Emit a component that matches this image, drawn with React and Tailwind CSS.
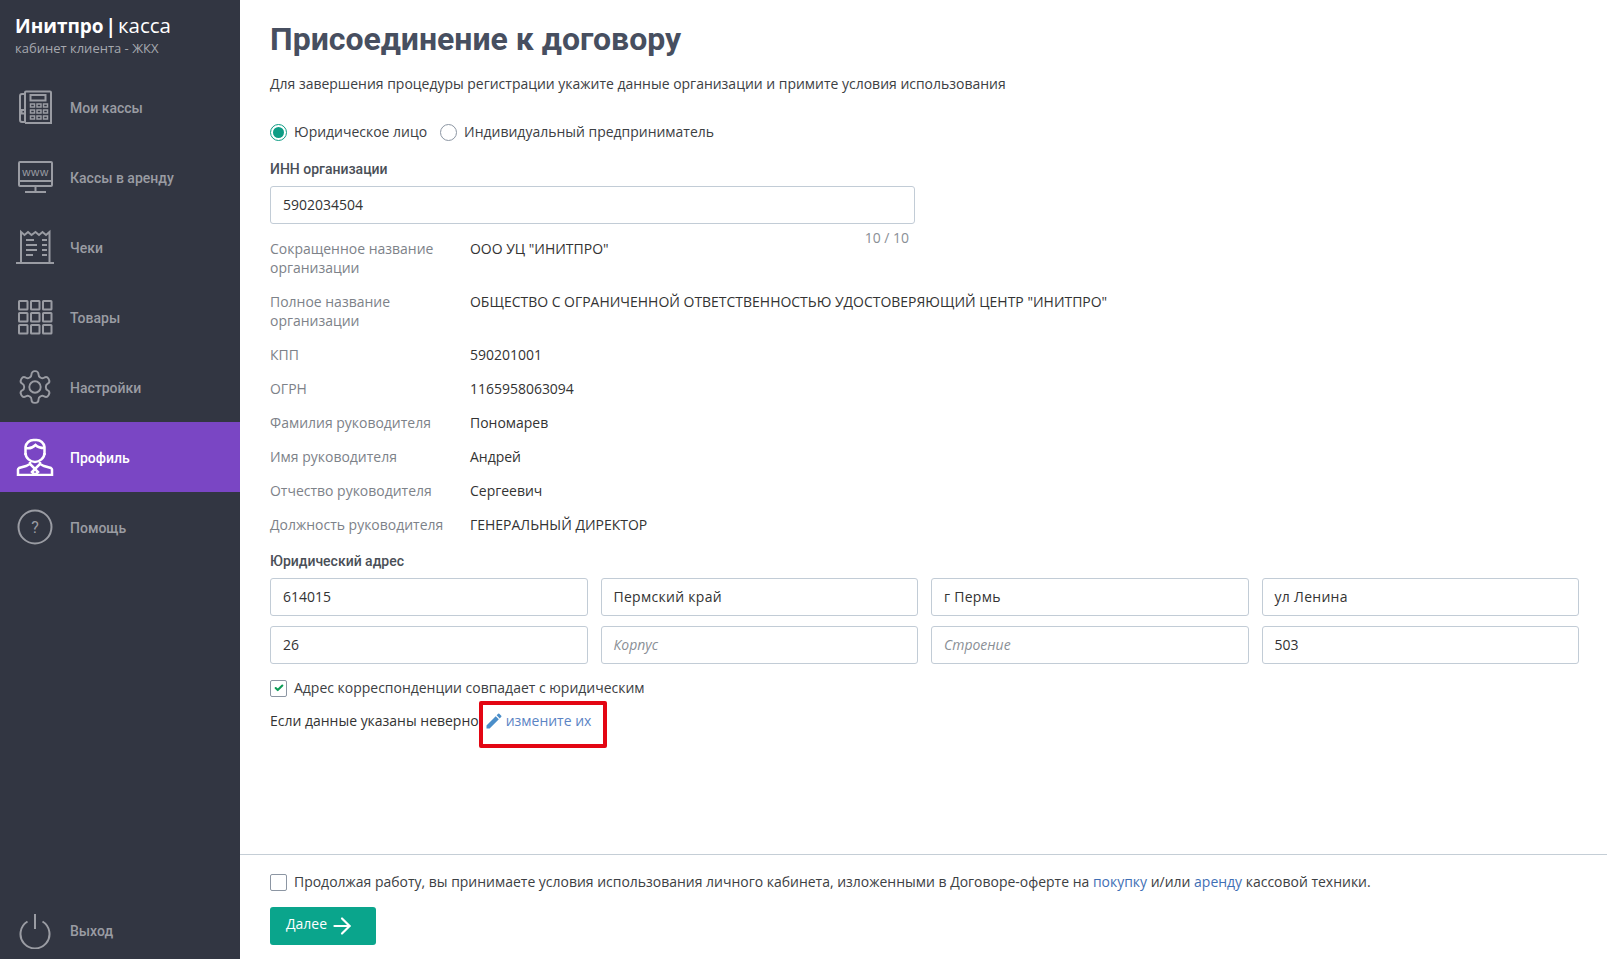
import { ArrowRight, Check } from "lucide-react";

const ic = { fill: "none", stroke: "currentColor", strokeWidth: 2 };

function IconKassa() {
  return (
    <svg viewBox="0 0 36 36" className="w-9 h-9" {...ic}>
      <path d="M5 5h3v28H5a2 2 0 0 1-2-2V7a2 2 0 0 1 2-2z" />
      <path d="M8 6V3.500a1 1 0 0 1 1-1h24a1 1 0 0 1 1 1V34H8" />
      <rect x="13.500" y="6" width="15" height="5.500" />
      <rect x="4.500" y="21" width="3.500" height="3.500" />
      {[14, 20.500, 27].map((x) =>
        [15, 21, 27].map((y) => <rect key={`${x}-${y}`} x={x - 0.500} y={y} width="4" height="3" strokeWidth="1.500" />)
      )}
    </svg>
  );
}

function IconWww() {
  return (
    <svg viewBox="0 0 36 36" className="w-9 h-9" {...ic}>
      <rect x="2" y="3" width="33" height="24" rx="1" />
      <path d="M2 22h33M18.500 27v6M8 33h21" />
      <text x="18.500" y="17" textAnchor="middle" fontSize="11.500" fill="currentColor" stroke="none" fontFamily="'Liberation Sans', sans-serif" letterSpacing="0.600">
        www
      </text>
    </svg>
  );
}

function IconReceipt() {
  return (
    <svg viewBox="0 0 38 36" className="w-[38px] h-9 -ml-[1px]" {...ic}>
      <path d="M0 34h38M5 33V3l3.500 3 3.500-3 3.500 3 4-3 3.500 3 3.500-3 3.500 3 3.500-3v30" />
      <path d="M10 11h8M10 16h11M10 21h11M10 26h7M26 11h5M26 16h5M26 21h5M26 26h5" />
    </svg>
  );
}

function IconGrid() {
  const pos = [2, 14, 26];
  return (
    <svg viewBox="0 0 36 36" className="w-9 h-9" {...ic}>
      {pos.map((x) =>
        pos.map((y) => <rect key={`${x}-${y}`} x={x} y={y} width="8.500" height="8.500" rx="0.500" />)
      )}
    </svg>
  );
}

function IconGear() {
  return (
    <svg viewBox="0 0 24 24" className="w-[38px] h-[38px] -ml-[1px]" fill="none" stroke="currentColor" strokeWidth="1.200">
      <path d="M12.220 2h-.440a2 2 0 0 0-2 2v.180a2 2 0 0 1-1 1.730l-.430.250a2 2 0 0 1-2 0l-.150-.080a2 2 0 0 0-2.730.730l-.220.380a2 2 0 0 0 .730 2.730l.150.100a2 2 0 0 1 1 1.720v.510a2 2 0 0 1-1 1.740l-.150.090a2 2 0 0 0-.730 2.730l.220.380a2 2 0 0 0 2.730.730l.150-.080a2 2 0 0 1 2 0l.430.250a2 2 0 0 1 1 1.730V20a2 2 0 0 0 2 2h.440a2 2 0 0 0 2-2v-.180a2 2 0 0 1 1-1.730l.430-.250a2 2 0 0 1 2 0l.150.080a2 2 0 0 0 2.730-.730l.220-.390a2 2 0 0 0-.730-2.730l-.150-.080a2 2 0 0 1-1-1.740v-.500a2 2 0 0 1 1-1.740l.150-.090a2 2 0 0 0 .730-2.730l-.220-.380a2 2 0 0 0-2.730-.730l-.150.080a2 2 0 0 1-2 0l-.430-.250a2 2 0 0 1-1-1.730V4a2 2 0 0 0-2-2z" />
      <circle cx="12" cy="12" r="3.600" />
    </svg>
  );
}

function IconProfile() {
  return (
    <svg viewBox="0 0 38 38" className="w-[38px] h-[38px] -ml-[1px]" fill="none" stroke="currentColor" strokeWidth="2.500">
      <path d="M9.500 17V9a8 8 0 0 1 8-7h3a8 8 0 0 1 8 7v8" />
      <path d="M9.500 10c4 1 8-1 10-3 2 2 6 3 9 3" />
      <path d="M9.500 15c0 5 5 9 9.500 9s9.500-4 9.500-9" />
      <path d="M14 24v2l5 5 5-5v-2M14 26l-4 2-7 2a2 2 0 0 0-1 2v5h34v-5a2 2 0 0 0-1-2l-7-2-4-2" />
      <path d="M19 31l-3 3 3 3 3-3z" />
    </svg>
  );
}

function IconHelp() {
  return (
    <svg viewBox="0 0 36 36" className="w-9 h-9" fill="none" stroke="currentColor" strokeWidth="2">
      <circle cx="18" cy="18" r="16.500" />
      <text x="18" y="24" textAnchor="middle" fontSize="16" fill="currentColor" stroke="none" fontFamily="Roboto, sans-serif">
        ?
      </text>
    </svg>
  );
}

function IconPower() {
  return (
    <svg viewBox="0 0 34 36" className="w-[34px] h-9" fill="none" stroke="currentColor" strokeWidth="2">
      <path d="M17 1v15" />
      <path d="M9.500 8.500a14.500 14.500 0 1 0 15 0" />
    </svg>
  );
}

const menu = [
  { label: "Мои кассы", icon: <IconKassa /> },
  { label: "Кассы в аренду", icon: <IconWww /> },
  { label: "Чеки", icon: <IconReceipt /> },
  { label: "Товары", icon: <IconGrid /> },
  { label: "Настройки", icon: <IconGear /> },
  { label: "Профиль", icon: <IconProfile />, active: true },
  { label: "Помощь", icon: <IconHelp /> },
];

const details = [
  ["Сокращенное название организации", 'ООО УЦ "ИНИТПРО"'],
  ["Полное название организации", 'ОБЩЕСТВО С ОГРАНИЧЕННОЙ ОТВЕТСТВЕННОСТЬЮ УДОСТОВЕРЯЮЩИЙ ЦЕНТР "ИНИТПРО"'],
  ["КПП", "590201001"],
  ["ОГРН", "1165958063094"],
  ["Фамилия руководителя", "Пономарев"],
  ["Имя руководителя", "Андрей"],
  ["Отчество руководителя", "Сергеевич"],
  ["Должность руководителя", "ГЕНЕРАЛЬНЫЙ ДИРЕКТОР"],
];

const address = [
  { value: "614015" },
  { value: "Пермский край", wide: true },
  { value: "г Пермь", wide: true },
  { value: "ул Ленина", wide: true },
  { value: "26" },
  { placeholder: "Корпус" },
  { placeholder: "Строение" },
  { value: "503" },
];

function Field({ value, placeholder, wide }) {
  return (
    <div className="h-[38px] px-3 flex items-center border border-[#c2ccd6] rounded-[3px] bg-white">
      {value ? (
        <span className={`text-[#333] ${wide ? "tracking-[0.3px]" : ""}`}>{value}</span>
      ) : (
        <span className="italic text-[#8a8f96]">{placeholder}</span>
      )}
    </div>
  );
}

function App() {
  return (
    <div className="flex h-[959px] overflow-hidden bg-white text-[13.980px] text-[#3c4043] font-['Open_Sans',sans-serif]">
      {/* Sidebar */}
      <aside className="w-[240px] shrink-0 bg-[#323642] flex flex-col">
        <div className="h-[72px] pl-[15px] pt-[12px]">
          <div className="text-[20.500px] leading-[26px] text-white">
            <span className="font-bold text-[19px] [word-spacing:-3px]">Инитпро | </span>
            <span>касса</span>
          </div>
          <div className="text-[13px] leading-[18px] text-[#a5a8af]">кабинет клиента - ЖКХ</div>
        </div>
        <nav>
          {menu.map((item) => (
            <div
              key={item.label}
              className={`h-[70px] flex items-center ${item.active ? "bg-[#7a46c4] text-white" : "text-[#9a9ca3]"}`}
            >
              <div className="w-[70px] pl-[17px] flex items-center">{item.icon}</div>
              <span className="mt-[2px] font-['Roboto',sans-serif] font-medium text-[14px]">{item.label}</span>
            </div>
          ))}
        </nav>
        <div className="mt-auto h-[56px] flex items-center text-[#9a9ca3]">
          <div className="w-[70px] pl-[18px] flex items-center">
            <IconPower />
          </div>
          <span className="font-['Roboto',sans-serif] font-medium text-[14px]">Выход</span>
        </div>
      </aside>

      {/* Content */}
      <main className="flex-1 flex flex-col min-w-0">
        <div className="flex-1 pl-[30px] pr-[28px]">
          <h1 className="mt-[17px] text-[32px] leading-[44px] font-bold font-['Roboto',sans-serif] text-[#474f60]">
            Присоединение к договору
          </h1>
          <p className="mt-[13px] leading-[20px]">
            Для завершения процедуры регистрации укажите данные организации и примите условия использования
          </p>

          <div className="mt-[26px] flex items-center h-[24px]">
            <span className="w-[17px] h-[17px] rounded-full border border-[#0d9c84] flex items-center justify-center">
              <span className="w-[11px] h-[11px] rounded-full bg-[#0d9c84]" />
            </span>
            <span className="ml-[7px]">Юридическое лицо</span>
            <span className="ml-[13px] w-[17px] h-[17px] rounded-full border border-[#8c96a3]" />
            <span className="ml-[7px]">Индивидуальный предприниматель</span>
          </div>

          <div className="mt-[15px] leading-[20px] font-medium font-['Roboto',sans-serif] text-[14px] text-[#4a4f57]">ИНН организации</div>
          <div className="mt-[7px] w-[645px] h-[38px] px-3 flex items-center border border-[#c2ccd6] rounded-[3px] text-[#333]">
            5902034504
          </div>
          <div className="w-[639px] text-right leading-[18px] mt-[5px] text-[#8a8f96]">10 / 10</div>

          <div className="-mt-[8px]">
            {details.map(([label, value]) => (
              <div key={label} className="flex pb-[15px] leading-[19px]">
                <div className="w-[200px] shrink-0 pr-4 text-[#7d8289]">{label}</div>
                <div className="text-[#333]">{value}</div>
              </div>
            ))}
          </div>

          <div className="mt-[2px] leading-[20px] font-medium font-['Roboto',sans-serif] text-[14px] text-[#4a4f57]">Юридический адрес</div>
          <div className="mt-[7px] grid grid-cols-4 gap-x-[13px] gap-y-[10px]">
            {address.map((f, i) => (
              <Field key={i} value={f.value} placeholder={f.placeholder} wide={f.wide} />
            ))}
          </div>

          <div className="mt-[14px] flex items-center h-[20px]">
            <span className="w-[17px] h-[17px] rounded-[2px] border border-[#8c96a3] flex items-center justify-center">
              <Check className="w-[10px] h-[10px] text-[#0d9c57]" strokeWidth={5} />
            </span>
            <span className="ml-[7px]">Адрес корреспонденции совпадает с юридическим</span>
          </div>

          <div className="mt-[13px] flex items-center h-[20px]">
            <span className="text-[#333]">Если данные указаны неверно</span>
            <span className="relative ml-[5px] flex items-center text-[#5b84c4]">
              <svg viewBox="0 0 24 24" className="w-[20px] h-[20px] text-[#4b8ec9]" fill="currentColor">
                <path d="M3 17.250V21h3.750L17.810 9.940l-3.750-3.750L3 17.250zM20.710 7.040a1 1 0 0 0 0-1.410l-2.340-2.340a1 1 0 0 0-1.410 0l-1.830 1.830 3.750 3.750 1.830-1.830z" />
              </svg>
              <span className="ml-[2px]">измените их</span>
              <span className="absolute left-[-5px] top-[-10px] w-[128px] h-[47px] border-[4px] border-[#e30613] rounded-[2px]" />
            </span>
          </div>
        </div>

        {/* Footer */}
        <div className="h-[105px] shrink-0 border-t border-[#c5ced6] pl-[30px]">
          <div className="mt-[18px] flex items-center h-[18px]">
            <span className="w-[17px] h-[17px] rounded-[2px] border border-[#8c96a3]" />
            <span className="ml-[7px]">
              Продолжая работу, вы принимаете условия использования личного кабинета, изложенными в Договоре-оферте на{" "}
              <span className="text-[#3f6fb5]">покупку</span> и/или <span className="text-[#3f6fb5]">аренду</span> кассовой техники.
            </span>
          </div>
          <button
            type="button"
            className="mt-[16px] w-[106px] h-[38px] pb-[3px] bg-[#0aa58c] text-white rounded-[3px] flex items-center pl-[16px] gap-[2px]"
          >
            Далее
            <ArrowRight className="w-[26px] h-[26px] mt-[2px]" strokeWidth={2} />
          </button>
        </div>
      </main>
    </div>
  );
}

export default App;
